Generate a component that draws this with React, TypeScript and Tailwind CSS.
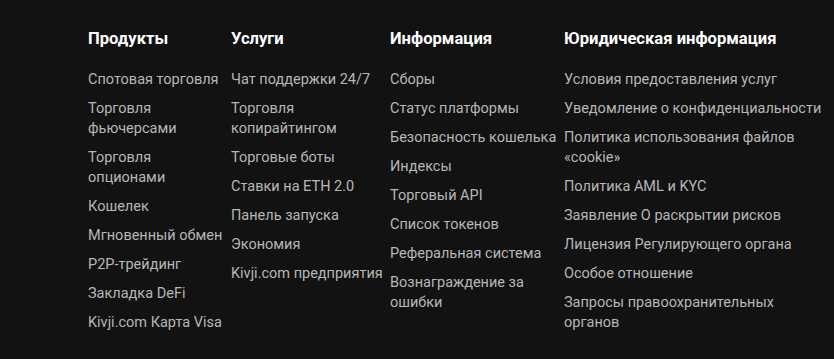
import React from "react";

const cols: { title: string; width: string; items: string[] }[] = [
  {
    title: "Продукты",
    width: "w-[143px]",
    items: [
      "Спотовая торговля",
      "Торговля фьючерсами",
      "Торговля опционами",
      "Кошелек",
      "Мгновенный обмен",
      "P2P-трейдинг",
      "Закладка DeFi",
      "Kivji.com Карта Visa",
    ],
  },
  {
    title: "Услуги",
    width: "w-[159px]",
    items: [
      "Чат поддержки 24/7",
      "Торговля копирайтингом",
      "Торговые боты",
      "Ставки на ETH 2.0",
      "Панель запуска",
      "Экономия",
      "Kivji.com предприятия",
    ],
  },
  {
    title: "Информация",
    width: "w-[174px]",
    items: [
      "Сборы",
      "Статус платформы",
      "Безопасность кошелька",
      "Индексы",
      "Торговый API",
      "Список токенов",
      "Реферальная система",
      "Вознаграждение за ошибки",
    ],
  },
  {
    title: "Юридическая информация",
    width: "w-[266px]",
    items: [
      "Условия предоставления услуг",
      "Уведомление о конфиденциальности",
      "Политика использования файлов «cookie»",
      "Политика AML и KYC",
      "Заявление О раскрытии рисков",
      "Лицензия Регулирующего органа",
      "Особое отношение",
      "Запросы правоохранительных органов",
    ],
  },
];

export default function App() {
  return (
    <div
      className="w-[834px] h-[359px] bg-[#121212] overflow-hidden"
      style={{ fontFamily: "Roboto, 'Noto Sans', sans-serif" }}
    >
      <div className="flex pl-[88px] pt-[27px]">
        {cols.map((c) => (
          <div key={c.title} className={`${c.width} shrink-0 pr-[4px]`}>
            <h3 className="text-[16.6px] leading-[24px] font-bold text-white">{c.title}</h3>
            <ul className="mt-[19px] flex flex-col gap-[9px]">
              {c.items.map((it) => (
                <li key={it} className="text-[14.5px] leading-[20px] text-[#b7b7b7]">
                  {it}
                </li>
              ))}
            </ul>
          </div>
        ))}
      </div>
    </div>
  );
}
